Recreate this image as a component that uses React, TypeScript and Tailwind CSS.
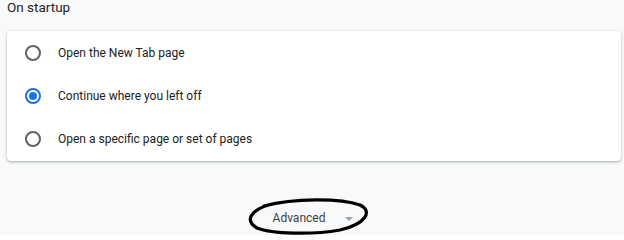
const options = [
  { id: "ntp", label: "Open the New Tab page" },
  { id: "continue", label: "Continue where you left off" },
  { id: "specific", label: "Open a specific page or set of pages" },
];

function Radio({ checked }: { checked: boolean }) {
  return (
    <span
      className={`flex h-4 w-4 shrink-0 items-center justify-center rounded-full border-2 ${
        checked ? "border-[#1a73e8]" : "border-[#5f6368]"
      }`}
    >
      {checked ? <span className="h-2 w-2 rounded-full bg-[#1a73e8]" /> : null}
    </span>
  );
}

export default function App() {
  const selected = "continue";
  return (
    <div className="relative h-[235px] w-[624px] overflow-hidden bg-[#f8f9fa] font-['Roboto','Liberation_Sans',sans-serif] text-[#202124]">
      <div className="-mt-[2px] pl-[7px] text-[13.5px] leading-[18px]">On startup</div>

      <div className="ml-[7px] mr-[3px] mt-[15px] rounded-[4px] bg-white shadow-[0_1px_2px_rgba(60,64,67,0.3),0_1px_3px_1px_rgba(60,64,67,0.1)]">
        {options.map((o) => (
          <div key={o.id} className="flex h-[43.33px] items-center pl-[18px]">
            <Radio checked={o.id === selected} />
            <span className="ml-[17px] text-[12px]">{o.label}</span>
          </div>
        ))}
      </div>

      <div className="mt-[48px] flex items-center justify-center pl-[2px]">
        <span className="text-[12px] text-[#3c4043]">Advanced</span>
        <svg className="ml-[20px] mt-[3px]" width="8" height="4" viewBox="0 0 8 4">
          <path d="M0 0h8L4 4z" fill="#9aa0a6" />
        </svg>
      </div>

      {/* hand-drawn annotation around the Advanced button */}
      <svg className="pointer-events-none absolute left-0 top-0" width="624" height="235">
        <path
          d="M264 206 C294 198 340 198 360 205 C373 211 366 224 340 230 C312 235 272 234 257 228 C245 221 249 210 272 204"
          fill="none"
          stroke="#000"
          strokeWidth="3.2"
          strokeLinecap="round"
        />
      </svg>
    </div>
  );
}
